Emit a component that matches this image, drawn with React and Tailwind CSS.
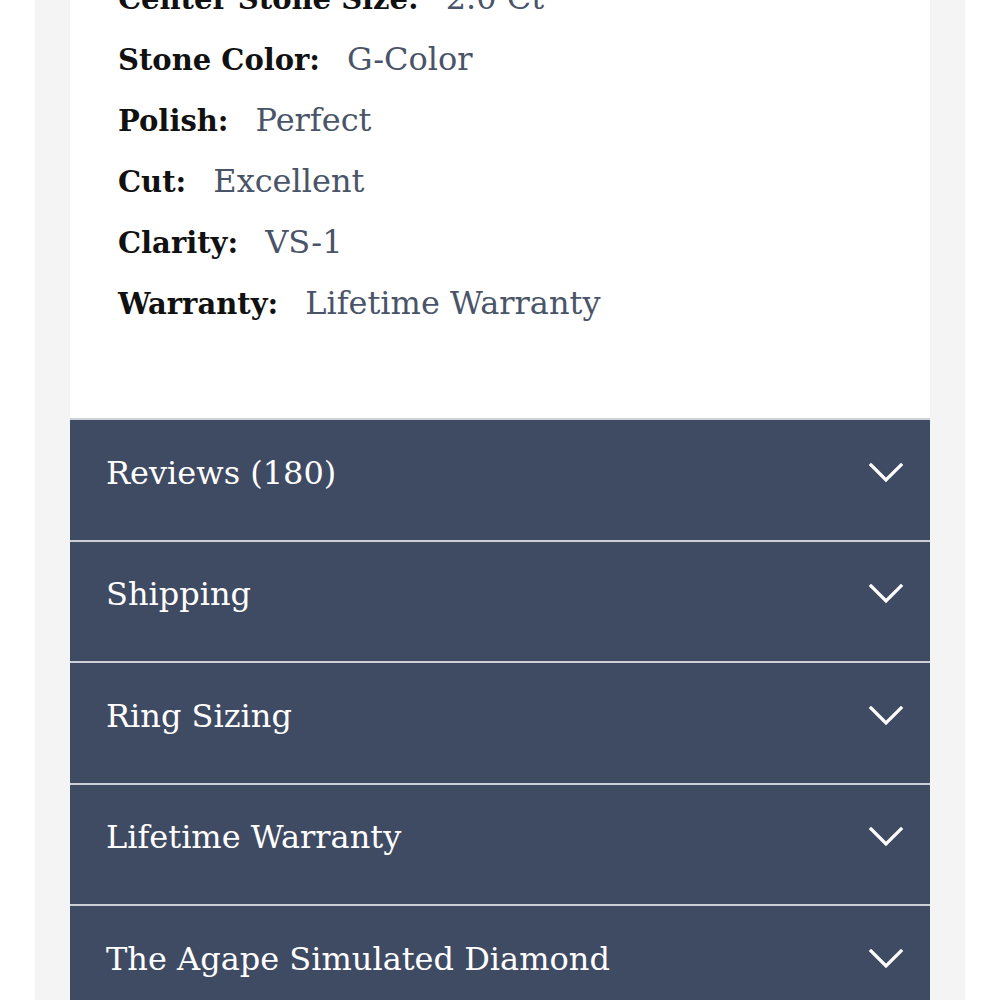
const specs = [
  ['Center Stone Size:', '2.0 Ct'],
  ['Stone Color:', 'G-Color'],
  ['Polish:', 'Perfect'],
  ['Cut:', 'Excellent'],
  ['Clarity:', 'VS-1'],
  ['Warranty:', 'Lifetime Warranty'],
];

const sections = ['Reviews (180)', 'Shipping', 'Ring Sizing', 'Lifetime Warranty', 'The Agape Simulated Diamond'];

function Chevron() {
  return (
    <svg width="36" height="20" viewBox="0 0 36 20" fill="none">
      <path d="M3 2 L18 17 L33 2" stroke="white" strokeWidth="3.2" strokeLinecap="square" />
    </svg>
  );
}

function App() {
  return (
    <div className="h-screen overflow-hidden bg-white flex justify-center" style={{ fontFamily: '"DejaVu Serif", serif' }}>
      <div className="w-[930px] bg-[#f4f4f4] px-[35px]">
        <div className="bg-white pl-[48px] pb-[85px]">
          <div className="mt-[-33px]">
            {specs.map(([label, value]) => (
              <div key={label} className="h-[61px] flex items-center">
                <div className="flex items-baseline">
                  <span className="font-bold text-[#111111] text-[29px]">{label}</span>
                  <span className="ml-[27px] text-[#4a5468] text-[32px]">{value}</span>
                </div>
              </div>
            ))}
          </div>
        </div>

        {sections.map((title) => (
          <div key={title} className="border-t-2 border-[#cdd0d6] bg-[#3f4a63] h-[121.5px] flex items-center justify-between pl-[36px] pr-[26px]">
            <span className="text-white text-[32px] pb-[14px]">{title}</span>
            <span className="pb-[14px]"><Chevron /></span>
          </div>
        ))}
      </div>
    </div>
  );
}

export default App;
